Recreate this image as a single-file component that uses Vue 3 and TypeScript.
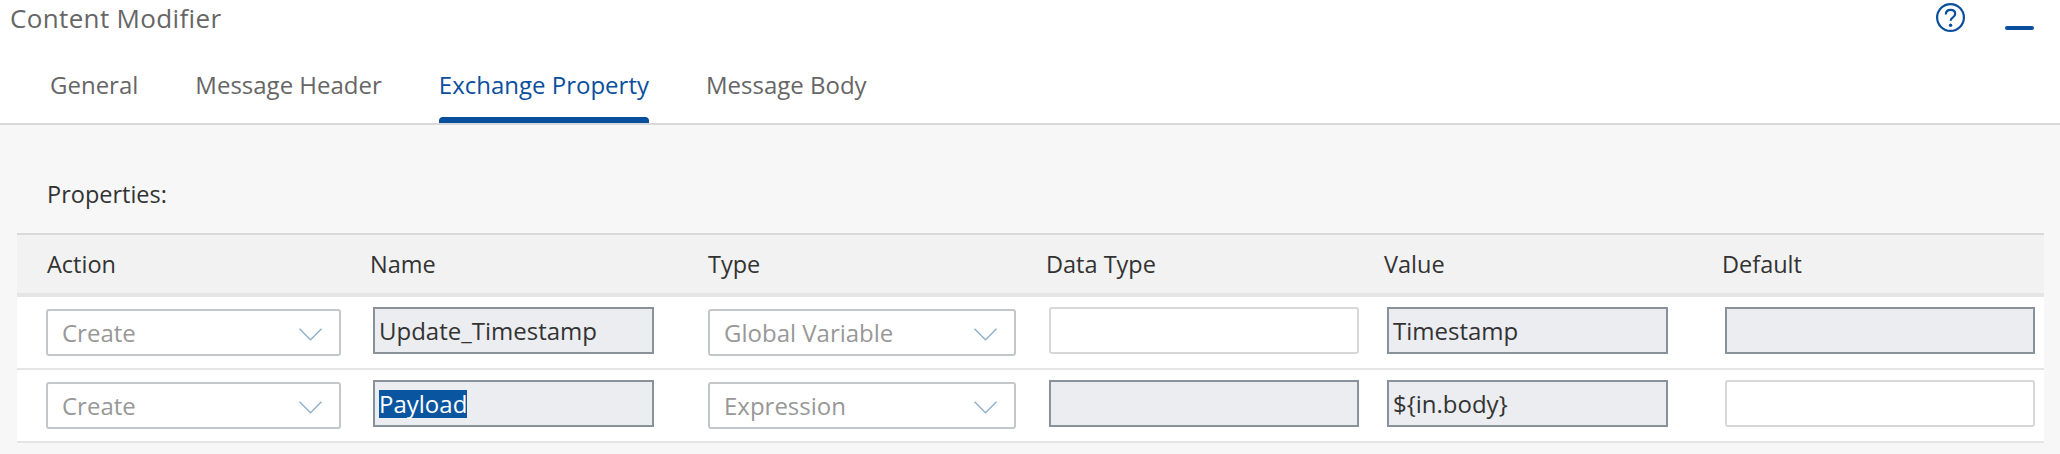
<script setup lang="ts">
interface Cell {
  kind: 'select' | 'input' | 'readonly'
  text?: string
  selected?: boolean
}

const tabs = ['General', 'Message Header', 'Exchange Property', 'Message Body']
const activeTab = 'Exchange Property'
const columns = ['Action', 'Name', 'Type', 'Data Type', 'Value', 'Default']

const rows: Cell[][] = [
  [
    { kind: 'select', text: 'Create' },
    { kind: 'readonly', text: 'Update_Timestamp' },
    { kind: 'select', text: 'Global Variable' },
    { kind: 'input' },
    { kind: 'readonly', text: 'Timestamp' },
    { kind: 'readonly' },
  ],
  [
    { kind: 'select', text: 'Create' },
    { kind: 'readonly', text: 'Payload', selected: true },
    { kind: 'select', text: 'Expression' },
    { kind: 'readonly' },
    { kind: 'readonly', text: '${in.body}' },
    { kind: 'input' },
  ],
]
</script>

<template>
  <div class="page">
    <header class="top">
      <div class="title-row">
        <h1 class="title">Content Modifier</h1>
        <div class="actions">
          <svg class="help" width="31" height="31" viewBox="0 0 31 31">
            <circle cx="15.5" cy="15.5" r="13.4" fill="none" stroke="#0a4f9e" stroke-width="2.2" />
            <path d="M10.8 12.4c0-2.9 2-4.6 4.8-4.6 2.7 0 4.6 1.6 4.6 4 0 1.900-1 2.900-2.500 3.900-1.300.9-2 1.600-2 3.100" fill="none" stroke="#0a4f9e" stroke-width="2.2" />
            <circle cx="15.6" cy="23.2" r="1.700" fill="#0a4f9e" />
          </svg>
          <span class="minimize"></span>
        </div>
      </div>
      <nav class="tabs">
        <a v-for="tab in tabs" :key="tab" class="tab" :class="{ active: tab === activeTab }">{{ tab }}</a>
      </nav>
    </header>

    <section class="content">
      <p class="label">Properties:</p>
      <div class="table">
        <div class="row head">
          <div v-for="col in columns" :key="col" class="cell">{{ col }}</div>
        </div>
        <div v-for="(row, r) in rows" :key="r" class="row body">
          <div v-for="(cell, c) in row" :key="c" class="cell">
            <div v-if="cell.kind === 'select'" class="select">
              <span>{{ cell.text }}</span>
              <svg width="23" height="13" viewBox="0 0 23 13">
                <path d="M.5.7l11 11 11-11" fill="none" stroke="#8fb0cc" stroke-width="1.500" />
              </svg>
            </div>
            <div v-else class="field" :class="{ readonly: cell.kind === 'readonly' }">
              <span :class="{ picked: cell.selected }">{{ cell.text }}</span>
            </div>
          </div>
        </div>
      </div>
    </section>
  </div>
</template>

<style scoped>
.page {
  width: 2060px;
  height: 454px;
  display: flex;
  flex-direction: column;
  background: #f7f7f7;
  font-family: "Open Sans", "Noto Sans", sans-serif;
  overflow: hidden;
}

.top {
  background: #fff;
  border-bottom: 2px solid #d9d9d9;
  height: 125px;
  box-sizing: border-box;
}

.title-row {
  display: flex;
  justify-content: space-between;
  height: 50px;
  padding: 0 26px 0 10px;
}

.title {
  margin: 0;
  font-size: 26px;
  letter-spacing: 0.35px;
  line-height: 36px;
  font-weight: 400;
  color: #666;
}

.actions {
  display: flex;
  gap: 39px;
  padding-top: 2px;
}

.minimize {
  width: 29px;
  height: 4px;
  margin-top: 24px;
  border-radius: 2px;
  background: #0a4f9e;
}

.tabs {
  display: flex;
  gap: 57px;
  padding-left: 50px;
}

.tab {
  position: relative;
  height: 73px;
  box-sizing: border-box;
  padding-top: 18px;
  font-size: 24px;
  line-height: 33px;
  color: #666;
}

.tab.active {
  color: #0a4f9e;
}

.tab.active::after {
  content: "";
  position: absolute;
  left: 0;
  right: 0;
  bottom: 0;
  height: 6px;
  border-radius: 4px 4px 0 0;
  background: #0a4f9e;
}

.content {
  padding: 0 16px 0 17px;
}

.label {
  margin: 53px 0 23px 30px;
  font-size: 23.500px;
  line-height: 32px;
  color: #333;
}

.table {
  border-top: 2px solid #d9d9d9;
}

.row {
  display: grid;
  grid-template-columns: 353px 338px 338px 338px 338px 322px;
}

.head {
  height: 62px;
  background: #f2f2f2;
  border-bottom: 4px solid #e5e5e5;
  box-sizing: border-box;
  font-size: 23.500px;
  line-height: 58px;
  color: #333;
}

.head .cell:first-child {
  padding-left: 30px;
}

.body {
  height: 73px;
  background: #fff;
  border-bottom: 2px solid #e5e5e5;
  box-sizing: border-box;
  font-size: 24px;
}

.body .cell {
  display: flex;
  padding-top: 10px;
}

.body .cell:nth-child(1) {
  padding-left: 29px;
  padding-right: 29px;
}

.body .cell:nth-child(2),
.body .cell:nth-child(5) {
  padding-left: 3px;
  padding-right: 54px;
}

.body .cell:nth-child(3) {
  padding-right: 30px;
}

.body .cell:nth-child(4),
.body .cell:nth-child(6) {
  padding-left: 3px;
  padding-right: 25px;
}

.body .cell:nth-child(6) {
  padding-right: 9px;
}

.select {
  flex: 1;
  height: 47px;
  margin-top: 2px;
  box-sizing: border-box;
  display: flex;
  align-items: center;
  justify-content: space-between;
  padding: 0 17px 0 14px;
  background: #fff;
  border: 2px solid #c4c7ca;
  border-radius: 3px;
  color: #989898;
}

.select svg {
  margin-top: 3px;
}

.field {
  flex: 1;
  height: 47px;
  box-sizing: border-box;
  display: flex;
  align-items: center;
  padding: 0 4px;
  background: #fff;
  border: 2px solid #d5d7d9;
  border-radius: 3px;
  color: #333;
}

.field.readonly {
  background: #ebedf0;
  border-color: #89919a;
  border-radius: 0;
}

.picked {
  background: #0a559f;
  color: #fff;
  line-height: 28px;
}
</style>
